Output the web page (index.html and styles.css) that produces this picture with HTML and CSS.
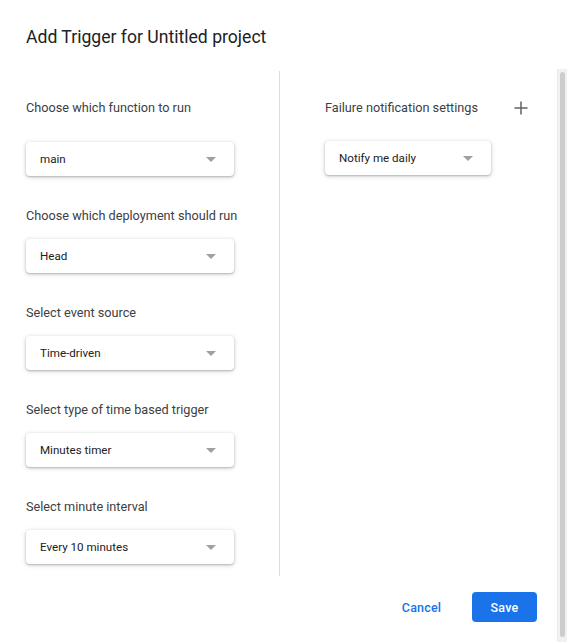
FILE: index.html
```html
<!DOCTYPE html>
<html>
<head>
<meta charset="utf-8">
<link rel="stylesheet" href="styles.css">
</head>
<body>
<div class="dialog">
  <div class="dialog-header">
    <h1 class="title">Add Trigger for Untitled project</h1>
  </div>
  <div class="dialog-body">
    <div class="scroll-content">
      <div class="columns">
        <div class="col col-left">
          <div class="field field-first">
            <div class="field-label">Choose which function to run</div>
            <div class="select"><span class="select-text">main</span><span class="caret"></span></div>
          </div>
          <div class="field">
            <div class="field-label">Choose which deployment should run</div>
            <div class="select"><span class="select-text">Head</span><span class="caret"></span></div>
          </div>
          <div class="field">
            <div class="field-label">Select event source</div>
            <div class="select"><span class="select-text">Time-driven</span><span class="caret"></span></div>
          </div>
          <div class="field">
            <div class="field-label">Select type of time based trigger</div>
            <div class="select"><span class="select-text">Minutes timer</span><span class="caret"></span></div>
          </div>
          <div class="field">
            <div class="field-label">Select minute interval</div>
            <div class="select"><span class="select-text">Every 10 minutes</span><span class="caret"></span></div>
          </div>
        </div>
        <div class="col col-right">
          <div class="right-head">
            <div class="field-label">Failure notification settings</div>
            <div class="icon-btn">
              <svg width="14" height="14" viewBox="0 0 14 14"><path d="M7 0.5V13.5M0.5 7H13.5" stroke="#5f6368" stroke-width="1.5" fill="none"/></svg>
            </div>
          </div>
          <div class="select select-narrow"><span class="select-text">Notify me daily</span><span class="caret"></span></div>
        </div>
      </div>
      <div class="footer">
        <div class="btn btn-text">Cancel</div>
        <div class="btn btn-primary">Save</div>
      </div>
    </div>
    <div class="scrollbar"><div class="thumb"></div></div>
  </div>
</div>
</body>
</html>
```
FILE: styles.css
```css
* { box-sizing: border-box; }
html, body { margin: 0; padding: 0; background: #fff; }
body { font-family: Roboto, "Liberation Sans", Arial, sans-serif; color: #202124; }
.dialog { width: 574px; height: 642px; display: flex; flex-direction: column; overflow: hidden; }
.dialog-header { height: 69px; padding: 25px 0 0 26px; }
.title { margin: 0; font-size: 17.6px; line-height: 24px; font-weight: 400; color: #202124; letter-spacing: 0; }
.dialog-body { flex: 1; display: flex; }
.scroll-content { width: 557px; display: flex; flex-direction: column; }
.columns { display: flex; margin-top: 2px; height: 505px; }
.col-left { width: 280px; padding: 29px 0 0 26px; border-right: 1px solid #dadce0; }
.col-right { flex: 1; padding: 29px 16px 0 45px; }
.field { margin-bottom: 32px; }
.field-label { font-size: 12.7px; line-height: 16px; color: #3c4043; }
.field .field-label { margin-bottom: 15px; }
.field-first .field-label { margin-bottom: 26px; }
.select { width: 208px; height: 34px; border-radius: 4px; background: #fff; display: flex; align-items: center; justify-content: space-between; padding: 0 18px 0 14px; box-shadow: 0 1px 2px 0 rgba(60,64,67,.3), 0 1px 4px 1px rgba(60,64,67,.15); }
.select-narrow { width: 166px; }
.select-text { font-size: 11.6px; color: #202124; }
.caret { width: 0; height: 0; border-left: 5px solid transparent; border-right: 5px solid transparent; border-top: 5px solid #a0a0a0; }
.right-head { display: flex; align-items: center; justify-content: space-between; height: 16px; margin-bottom: 25px; }
.icon-btn { width: 40px; height: 40px; display: flex; align-items: center; justify-content: center; margin-right: 0; }
.footer { display: flex; justify-content: flex-end; align-items: center; gap: 18px; padding: 16px 20px 0 0; }
.btn { height: 30px; min-width: 65px; display: flex; align-items: center; justify-content: center; font-size: 12.5px; font-weight: 500; border-radius: 4px; letter-spacing: 0.2px; }
.btn-text { color: #1a73e8; }
.btn-primary { background: #1a73e8; color: #fff; }
.scrollbar { width: 10px; background: #f1f1f1; border-left: 1px solid #ececec; padding: 3px 2px 0 2px; margin-bottom: 0; }
.thumb { height: 565px; background: #cdcdcd; border-radius: 3px; }
```
